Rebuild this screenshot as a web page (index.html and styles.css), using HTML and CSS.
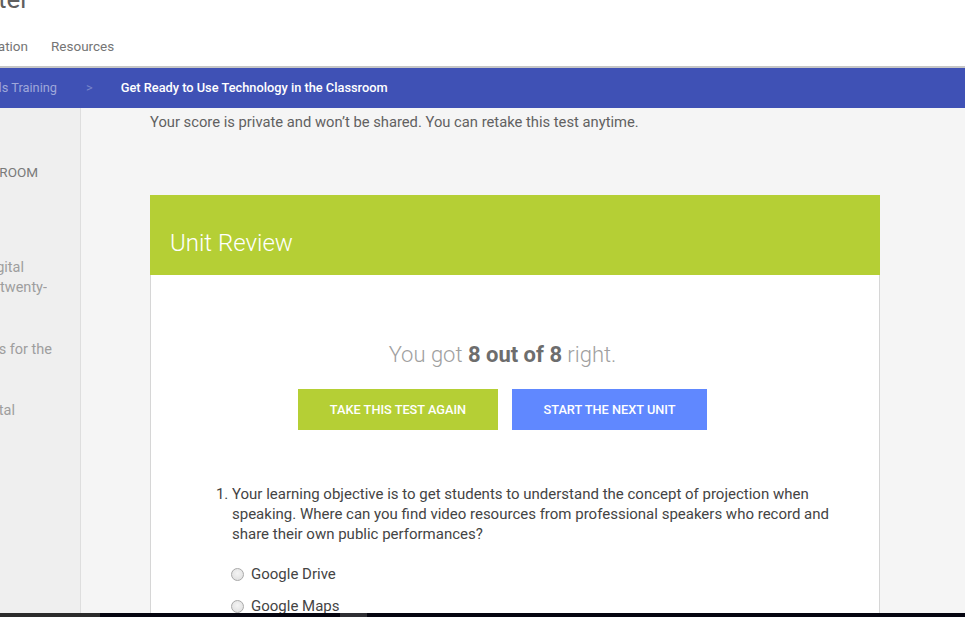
FILE: index.html
```html
<!DOCTYPE html>
<html lang="en">
<head>
<meta charset="utf-8">
<title>Unit Review</title>
<link rel="stylesheet" href="styles.css">
</head>
<body>
<header class="site-header">
  <div class="cut cut-title"><span>Training Center</span></div>
  <nav class="site-nav">
    <div class="cut cut-nav"><a href="#">Certification</a></div>
    <a href="#">Resources</a>
  </nav>
</header>
<div class="crumbs">
  <div class="cut cut-crumb"><a href="#">Fundamentals Training</a></div>
  <span class="crumb-sep">&gt;</span>
  <span class="crumb-current">Get Ready to Use Technology in the Classroom</span>
</div>
<div class="layout">
  <aside class="sidebar">
    <div class="side-item side-heading"><div class="cut cut-37"><span>USE TECHNOLOGY IN THE CLASSROOM</span></div></div>
    <div class="side-item side-a">
      <div class="cut cut-23"><span>Lesson 1: Promoting digital</span></div>
      <div class="cut cut-50"><span>citizenship in the twenty-</span></div>
    </div>
    <div class="side-item side-b">
      <div class="cut cut-51"><span>Lesson 2: Tools for the</span></div>
      <div class="cut cut-0"><span>classroom</span></div>
    </div>
    <div class="side-item side-c">
      <div class="cut cut-14"><span>Lesson 3: Digital</span></div>
    </div>
  </aside>
  <main class="main">
    <p class="privacy">Your score is private and won’t be shared. You can retake this test anytime.</p>
    <section class="card">
      <h1 class="card-head">Unit Review</h1>
      <div class="card-body">
        <div class="result">
          <p class="score">You got <strong>8 out of 8</strong> right.</p>
          <div class="actions">
            <a class="btn btn-green" href="#">TAKE THIS TEST AGAIN</a>
            <a class="btn btn-blue" href="#">START THE NEXT UNIT</a>
          </div>
        </div>
        <ol class="questions">
          <li>
            <p class="q-text">Your learning objective is to get students to understand the concept of projection when speaking. Where can you find video resources from professional speakers who record and share their own public performances?</p>
            <label class="opt"><input type="radio" name="q1"><span>Google Drive</span></label>
            <label class="opt"><input type="radio" name="q1"><span>Google Maps</span></label>
            <label class="opt"><input type="radio" name="q1"><span>YouTube</span></label>
          </li>
        </ol>
      </div>
    </section>
  </main>
</div>
<div class="taskbar"><span class="tb-a"></span><span class="tb-b"></span><span class="tb-c"></span></div>
</body>
</html>
```

FILE: styles.css
```css
* { box-sizing: border-box; }
html, body { margin: 0; padding: 0; }
body {
  font-family: Roboto, "Liberation Sans", Arial, sans-serif;
  background: #f5f5f5;
  color: #424242;
  overflow: hidden;
  height: 617px;
}
a { text-decoration: none; color: inherit; }

.cut {
  display: flex;
  justify-content: flex-end;
  overflow: hidden;
  white-space: nowrap;
  flex: none;
}

.site-header {
  height: 66px;
  background: #fff;
  display: flex;
  flex-direction: column;
}
.cut-title {
  width: 29px;
  height: 22px;
  margin-top: -14px;
  font-size: 26px;
  line-height: 26px;
  color: #5f5f5f;
  align-items: flex-start;
}
.site-nav {
  display: flex;
  gap: 23px;
  margin-top: 29px;
  font-size: 13.5px;
  line-height: 18px;
  color: #757575;
}
.cut-nav { width: 28px; }

.crumbs {
  border-top: 2px solid #c6c6c6;
  height: 42px;
  background: #3f51b5;
  display: flex;
  align-items: center;
  font-size: 12.8px;
  font-weight: 500;
  padding-bottom: 2px;
}
.cut-crumb { width: 57px; color: #9fa8da; font-weight: 400; }
.crumb-sep { margin-left: 29px; color: #7986cb; font-weight: 400; }
.crumb-current { margin-left: 28px; color: #fff; }

.layout { display: flex; height: 509px; }

.sidebar {
  width: 81px;
  flex: none;
  background: #efefef;
  border-right: 1px solid #dedede;
  font-size: 14.5px;
  line-height: 20px;
  color: #9e9e9e;
}
.side-heading { margin-top: 54px; color: #7a7a7a; font-size: 13.5px; }
.side-a { margin-top: 76px; }
.side-b { margin-top: 42px; }
.side-c { margin-top: 21px; }
.cut-37 { width: 38px; }
.cut-23 { width: 24px; }
.cut-50 { width: 47px; }
.cut-51 { width: 52px; }
.cut-14 { width: 15px; }
.cut-0 { width: 0; height: 20px; }

.main {
  flex: 1;
  padding: 0 85px 0 69px;
}
.privacy {
  margin: 4px 0 0;
  font-size: 14.75px;
  line-height: 20px;
  color: #616161;
}
.card { margin-top: 63px; }
.card-head {
  margin: 0;
  height: 80px;
  background: #b5cf35;
  color: #fff;
  font-size: 24px;
  font-weight: 300;
  line-height: 30px;
  padding: 33px 20px 0;
}
.card-body {
  background: #fff;
  border-left: 1px solid #d6d6d6;
  border-right: 1px solid #d6d6d6;
  height: 400px;
}
.result {
  padding: 66px 25px 0 0;
  display: flex;
  flex-direction: column;
  align-items: center;
}
.score {
  margin: 0;
  font-size: 22px;
  line-height: 28px;
  font-weight: 300;
  color: #a0a0a0;
}
.score strong { font-weight: 700; color: #6d6d6d; }
.actions {
  display: flex;
  gap: 14px;
  margin-top: 20px;
}
.btn {
  height: 41px;
  display: flex;
  align-items: center;
  justify-content: center;
  color: #fff;
  font-size: 12.75px;
  font-weight: 500;
}
.btn-green { width: 200px; background: #b5cf35; }
.btn-blue { width: 195px; background: #6088ff; }

.questions {
  margin: 54px 0 0;
  padding: 0 40px 0 81px;
  font-size: 15px;
  line-height: 20px;
  color: #444;
}
.q-text { margin: 0 0 14px; }
.opt {
  display: flex;
  align-items: center;
  gap: 7px;
  height: 32px;
  margin-left: -1px;
  font-size: 15px;
  color: #444;
}
.opt input {
  appearance: none;
  -webkit-appearance: none;
  margin: 0;
  width: 13px;
  height: 13px;
  border-radius: 50%;
  border: 1px solid #a9a9a9;
  background: radial-gradient(circle at 50% 40%, #f4f4f4 0, #dcdcdc 100%);
}

.taskbar {
  position: fixed;
  left: 0;
  right: 0;
  bottom: 0;
  height: 4px;
  background: #050510;
  display: flex;
}
.tb-a { width: 100px; background: #2b2b2b; }
.tb-b { width: 240px; }
.tb-c { width: 27px; background: #2e2e33; }
```
